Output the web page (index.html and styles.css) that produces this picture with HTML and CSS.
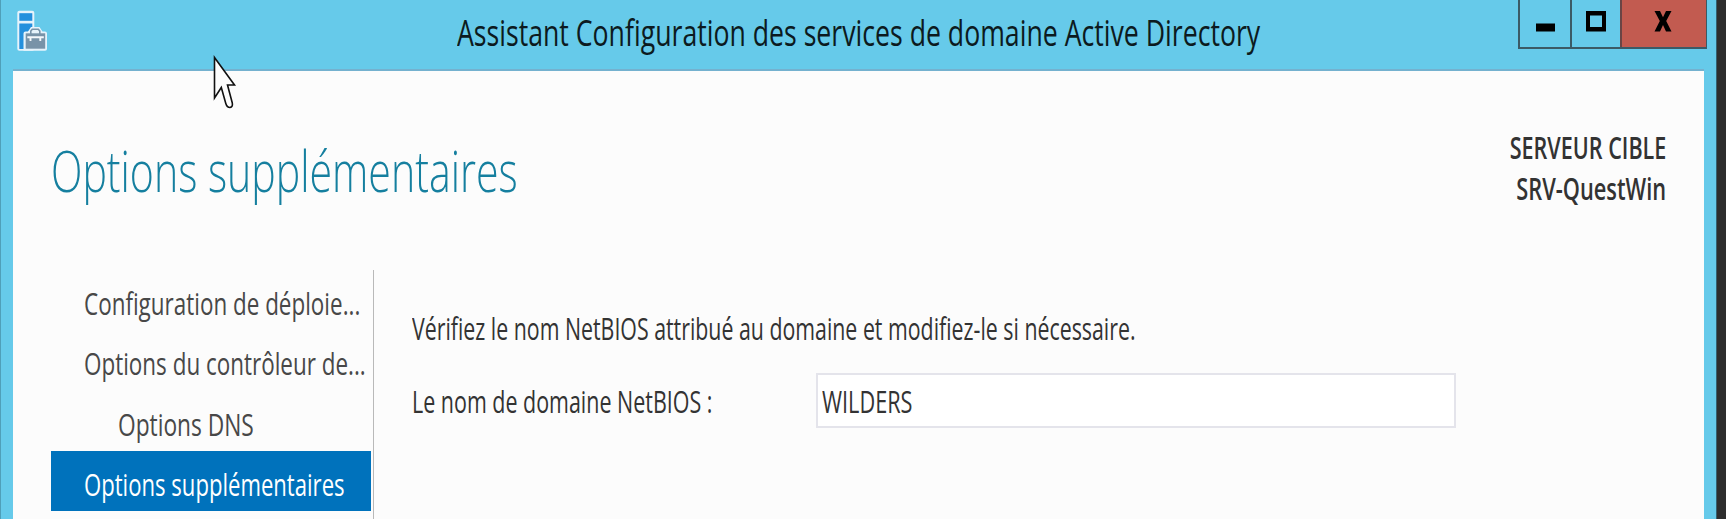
FILE: index.html
```html
<!DOCTYPE html>
<html lang="fr">
<head>
<meta charset="utf-8">
<title>Assistant Configuration des services de domaine Active Directory</title>
<link rel="stylesheet" href="styles.css">
</head>
<body>
<div class="window">
  <header class="titlebar">
    <svg class="app-icon" width="32" height="43" viewBox="0 0 32 43">
      <rect x="0.300" y="0.700" width="17" height="40" rx="2" fill="#e6f3fb"/>
      <rect x="2.300" y="3.200" width="13" height="7.600" fill="#2490dd"/>
      <path d="M2.300 13.500h13v5l-8 6V39h-5z" fill="#2490dd"/>
      <path d="M6.500 40.700V23.500q0-2 2-2h2.500l3-4.500h8.500l3 4.500H28q2 0 2 2V39q0 1.700-2 1.700z" fill="#e6f3fb"/>
      <rect x="8.700" y="23.300" width="19.500" height="15.400" fill="#7893a8"/>
      <path d="M13.800 24v-3l1.500-1.800h6l1.500 1.800v3" fill="none" stroke="#7893a8" stroke-width="1.600"/>
      <path d="M10.300 27.200h16.500M13.500 27v4M23.300 27v4" fill="none" stroke="#f4f8fb" stroke-width="1.900"/>
    </svg>
    <h1 class="caption"><span class="fit">Assistant Configuration des services de domaine Active Directory</span></h1>
    <div class="controls">
      <div class="control minimize"><svg width="19" height="32" viewBox="0 0 19 32"><path d="M0 23.500h19v8H0z"/></svg></div>
      <div class="control maximize"><svg width="20" height="32" viewBox="0 0 20 32"><path d="M0 11h20v20.500H0zM4 15.500v11.500h12V15.500z" fill-rule="evenodd"/></svg></div>
      <div class="control close"><svg width="18" height="32" viewBox="0 0 18 32"><path d="M.5 11h5.500l3 6.300L12 11h5.500l-5.300 10L17.500 31.500H12l-3-6.600-3 6.600H.5L5.800 21z"/></svg></div>
    </div>
  </header>
  <main class="page">
    <div class="heading">
      <h2 class="page-title"><span class="fit">Options supplémentaires</span></h2>
      <div class="target"><span class="fit server-label">SERVEUR CIBLE</span><span class="fit server-name">SRV-QuestWin</span></div>
    </div>
    <div class="body">
      <nav class="steps">
        <a class="step"><span class="fit">Configuration de déploie...</span></a>
        <a class="step"><span class="fit">Options du contrôleur de...</span></a>
        <a class="step nested"><span class="fit">Options DNS</span></a>
        <a class="step current"><span class="fit">Options supplémentaires</span></a>
      </nav>
      <section class="content">
        <p class="line"><span class="fit">Vérifiez le nom NetBIOS attribué au domaine et modifiez-le si nécessaire.</span></p>
        <div class="field">
          <div class="label"><span class="fit">Le nom de domaine NetBIOS :</span></div>
          <div class="input"><span class="fit">WILDERS</span></div>
        </div>
      </section>
    </div>
  </main>
  <svg class="cursor" width="25" height="56" viewBox="0 0 25 56"><path d="M1.500 2.500V43l6.800-10.500 4.500 16q1.200 4 4.200 4 3-.5 2.300-4.500L14.500 30h7z" fill="#fdfdfd" stroke="#111" stroke-width="1.600"/></svg>
</div>
</body>
</html>
```
FILE: styles.css
```css
* { box-sizing: border-box; margin: 0; }

body {
  background: #2d2d2d;
  font-family: "Open Sans", "Noto Sans", sans-serif;
  color: #333;
  overflow: hidden;
}

.window {
  position: relative;
  width: 1717px;
  height: 519px;
  background: #66caea;
  border-left: 1px solid #4f9fb9;
  border-right: 1px solid #35606f;
  padding: 0 12px;
}

/* Condensed lettering: each run of text is narrowed horizontally. */
.fit {
  display: inline-block;
  white-space: nowrap;
  transform-origin: 0 0;
  transform: scaleX(var(--narrow, 0.72));
}

.titlebar { height: 69px; display: flex; margin-right: -5px; }
.app-icon { margin: 10px 0 0 4px; flex: none; }
.caption {
  flex: none;
  width: 1061px;
  margin-left: 408px;
  font-size: 37px;
  font-weight: 400;
  line-height: 63px;
  color: #0c1a20;
  --narrow: 0.7205;
}

.controls {
  flex: none;
  display: flex;
  width: 189px;
  height: 49px;
  border: solid #3b5a66;
  border-width: 0 1px 2px 2px;
}
.control { display: flex; justify-content: center; }
.control svg { display: block; }
.minimize { width: 50px; }
.maximize { width: 50px; border-left: 2px solid #3b5a66; }
.close { flex: 1; border-left: 2px solid #6b4444; background: #c25b50; padding-right: 2px; }

.page {
  height: 450px;
  padding: 0 38px 0 37px;
  background: #fcfcfc;
  border-top: 2px solid #74b1cf;
}

.heading { display: flex; justify-content: space-between; height: 199px; }
.page-title {
  padding: 69px 0 0 1px;
  font-size: 57px;
  font-weight: 300;
  line-height: 60px;
  color: #157f9f;
  --narrow: 0.7205;
}
.target {
  display: flex;
  flex-direction: column;
  align-items: flex-end;
  padding-top: 56px;
  font-size: 31px;
  font-weight: 600;
  line-height: 40.500px;
}
.target .fit { transform-origin: 100% 0; }
.server-label { --narrow: 0.695; }
.server-name { --narrow: 0.703; }

.body { display: flex; height: 249px; font-size: 31px; }

.steps { flex: none; width: 324px; padding: 0 2px 0 1px; border-right: 1px solid #b9b9b9; }
.step {
  display: block;
  height: 60.300px;
  padding-left: 33px;
  line-height: 66px;
  color: #484848;
  --narrow: 0.724;
}
.nested { padding-left: 67px; --narrow: 0.733; }
.current { background: #0072bc; color: #fff; --narrow: 0.713; }

.content { padding: 38px 0 0 38px; }
.line { width: 1044px; line-height: 41px; --narrow: 0.688; }
.field { display: flex; margin-top: 24px; }
.label { width: 404px; line-height: 56px; --narrow: 0.692; }
.input {
  width: 640px;
  height: 55px;
  padding-left: 4px;
  border: 2px solid #e4e4eb;
  background: #fff;
  line-height: 52px;
  --narrow: 0.7;
}

.cursor { position: absolute; left: 212px; top: 55px; }
```
